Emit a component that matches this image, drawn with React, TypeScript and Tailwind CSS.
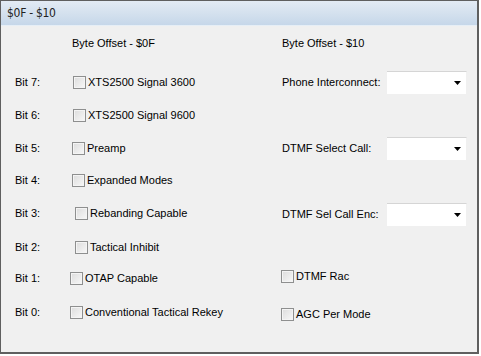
import React from "react";

function Check({ label, ml }: { label: string; ml: string }) {
  return (
    <div className={`flex items-center ${ml}`}>
      <span className="w-[13px] h-[13px] shrink-0 border border-[#8e8f8f] bg-gradient-to-br from-[#dcdcdc] to-[#f8f8f8] shadow-[inset_0_0_0_1px_#f4f4f4]" />
      <span className="ml-[2px] whitespace-nowrap">{label}</span>
    </div>
  );
}

function Combo() {
  return (
    <div className="w-[80px] h-[23px] bg-white border-t border-[#d5d5d5] border-r border-r-[#f0f0f0] flex items-center justify-end pr-[5px]">
      <svg width="7" height="4" viewBox="0 0 7 4">
        <path d="M0 0h7L3.5 4z" fill="#000" />
      </svg>
    </div>
  );
}

export default function App() {
  const rows: {
    bit: string;
    mt: string;
    left: React.ReactNode;
    right?: React.ReactNode;
  }[] = [
    {
      bit: "Bit 7:",
      mt: "mt-[19px]",
      left: <Check label="XTS2500 Signal 3600" ml="ml-[36px]" />,
      right: (
        <div className="flex items-center">
          <span className="w-[105px] whitespace-nowrap">Phone Interconnect:</span>
          <Combo />
        </div>
      ),
    },
    { bit: "Bit 6:", mt: "mt-[13px]", left: <Check label="XTS2500 Signal 9600" ml="ml-[36px]" /> },
    {
      bit: "Bit 5:",
      mt: "mt-[13px]",
      left: <Check label="Preamp" ml="ml-[35px]" />,
      right: (
        <div className="flex items-center">
          <span className="w-[105px] whitespace-nowrap">DTMF Select Call:</span>
          <Combo />
        </div>
      ),
    },
    { bit: "Bit 4:", mt: "mt-[12px]", left: <Check label="Expanded Modes" ml="ml-[35px]" /> },
    {
      bit: "Bit 3:",
      mt: "mt-[13px]",
      left: <Check label="Rebanding Capable" ml="ml-[38px]" />,
      right: (
        <div className="flex items-center mt-[2px]">
          <span className="w-[105px] whitespace-nowrap">DTMF Sel Call Enc:</span>
          <Combo />
        </div>
      ),
    },
    { bit: "Bit 2:", mt: "mt-[14px]", left: <Check label="Tactical Inhibit" ml="ml-[38px]" /> },
    {
      bit: "Bit 1:",
      mt: "mt-[11px]",
      left: <Check label="OTAP Capable" ml="ml-[33px]" />,
      right: (
        <div className="-mt-[4px]">
          <Check label="DTMF Rac" ml="-ml-[1px]" />
        </div>
      ),
    },
    {
      bit: "Bit 0:",
      mt: "mt-[14px]",
      left: <Check label="Conventional Tactical Rekey" ml="ml-[33px]" />,
      right: (
        <div className="mt-[4px]">
          <Check label="AGC Per Mode" ml="-ml-[1px]" />
        </div>
      ),
    },
  ];

  return (
    <div className="w-[481px] h-[356px] bg-white font-['Liberation_Sans',Arial,sans-serif] text-[11px] text-black">
      <div className="w-[479px] h-[354px] border border-[#5f5f5f] border-r-2 border-b-2 bg-[#f0f0f0] flex flex-col">
        <div className="h-[25px] bg-gradient-to-b from-[#e3ebf4] to-[#c6d7e9] border-b border-[#e6eef6] flex items-center pl-[6px] text-[12px] text-[#222] font-['DejaVu_Sans_Condensed','Liberation_Sans',sans-serif] tracking-[-0.3px]">
          $0F - $10
        </div>
        <div className="flex flex-col">
          <div className="flex h-[20px] items-center mt-[7px]">
            <span className="w-[281px] pl-[71px]">Byte Offset - $0F</span>
            <span>Byte Offset - $10</span>
          </div>
          {rows.map((r) => (
            <div key={r.bit} className={`flex h-[20px] items-center ${r.mt}`}>
              <div className="w-[281px] flex items-center pl-[14px]">
                <span className="w-[22px] shrink-0 whitespace-nowrap">{r.bit}</span>
                {r.left}
              </div>
              <div>{r.right}</div>
            </div>
          ))}
        </div>
      </div>
    </div>
  );
}
